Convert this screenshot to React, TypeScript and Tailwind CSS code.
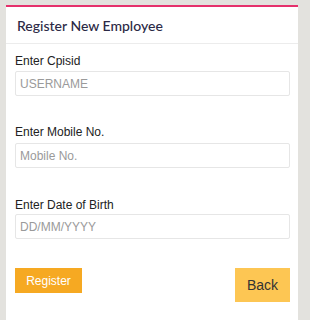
import React from 'react'

function Field({ label, placeholder, labelGap, top }: { label: string; placeholder: string; labelGap: string; top: string }) {
    return (
        <div className={`flex flex-col ${top}`}>
            <label className="text-[12px] leading-[14px] text-[#222]">{label}</label>
            <input
                type="text"
                placeholder={placeholder}
                className={`${labelGap} h-[25px] w-[275px] rounded-[2px] border border-[#e6e6e6] bg-white px-[4px] text-[12px] text-[#555] placeholder:text-[#9a9a9a] outline-none`}
            />
        </div>
    )
}

export default function App() {
    return (
        <div className="h-[320px] w-[310px] overflow-hidden bg-[#e3e2de] pt-[5px] pl-[6px] font-['Liberation_Sans',Arial,sans-serif]">
            <div className="h-[320px] w-[292px] border-t-2 border-[#e5316c] bg-white">
                <div className="flex h-[37px] items-center border-b border-[#ececec] pl-[11px] pt-[1px]">
                    <span className="font-['Lato',sans-serif] text-[14px] font-medium text-[#2b2945]">Register New Employee</span>
                </div>
                <div className="flex flex-col pl-[9px]">
                    <Field label="Enter Cpisid" placeholder="USERNAME" labelGap="mt-[3px]" top="mt-[10px]" />
                    <Field label="Enter Mobile No." placeholder="Mobile No." labelGap="mt-[4px]" top="mt-[29px]" />
                    <Field label="Enter Date of Birth" placeholder="DD/MM/YYYY" labelGap="mt-[2px]" top="mt-[30px]" />
                    <div className="mt-[29px] flex w-[275px] items-start justify-between">
                        <button className="h-[25px] w-[67px] bg-[#f6a922] text-[12px] text-white">Register</button>
                        <button className="h-[34px] w-[55px] bg-[#fdc653] text-[14px] text-[#333]">Back</button>
                    </div>
                </div>
            </div>
        </div>
    )
}
